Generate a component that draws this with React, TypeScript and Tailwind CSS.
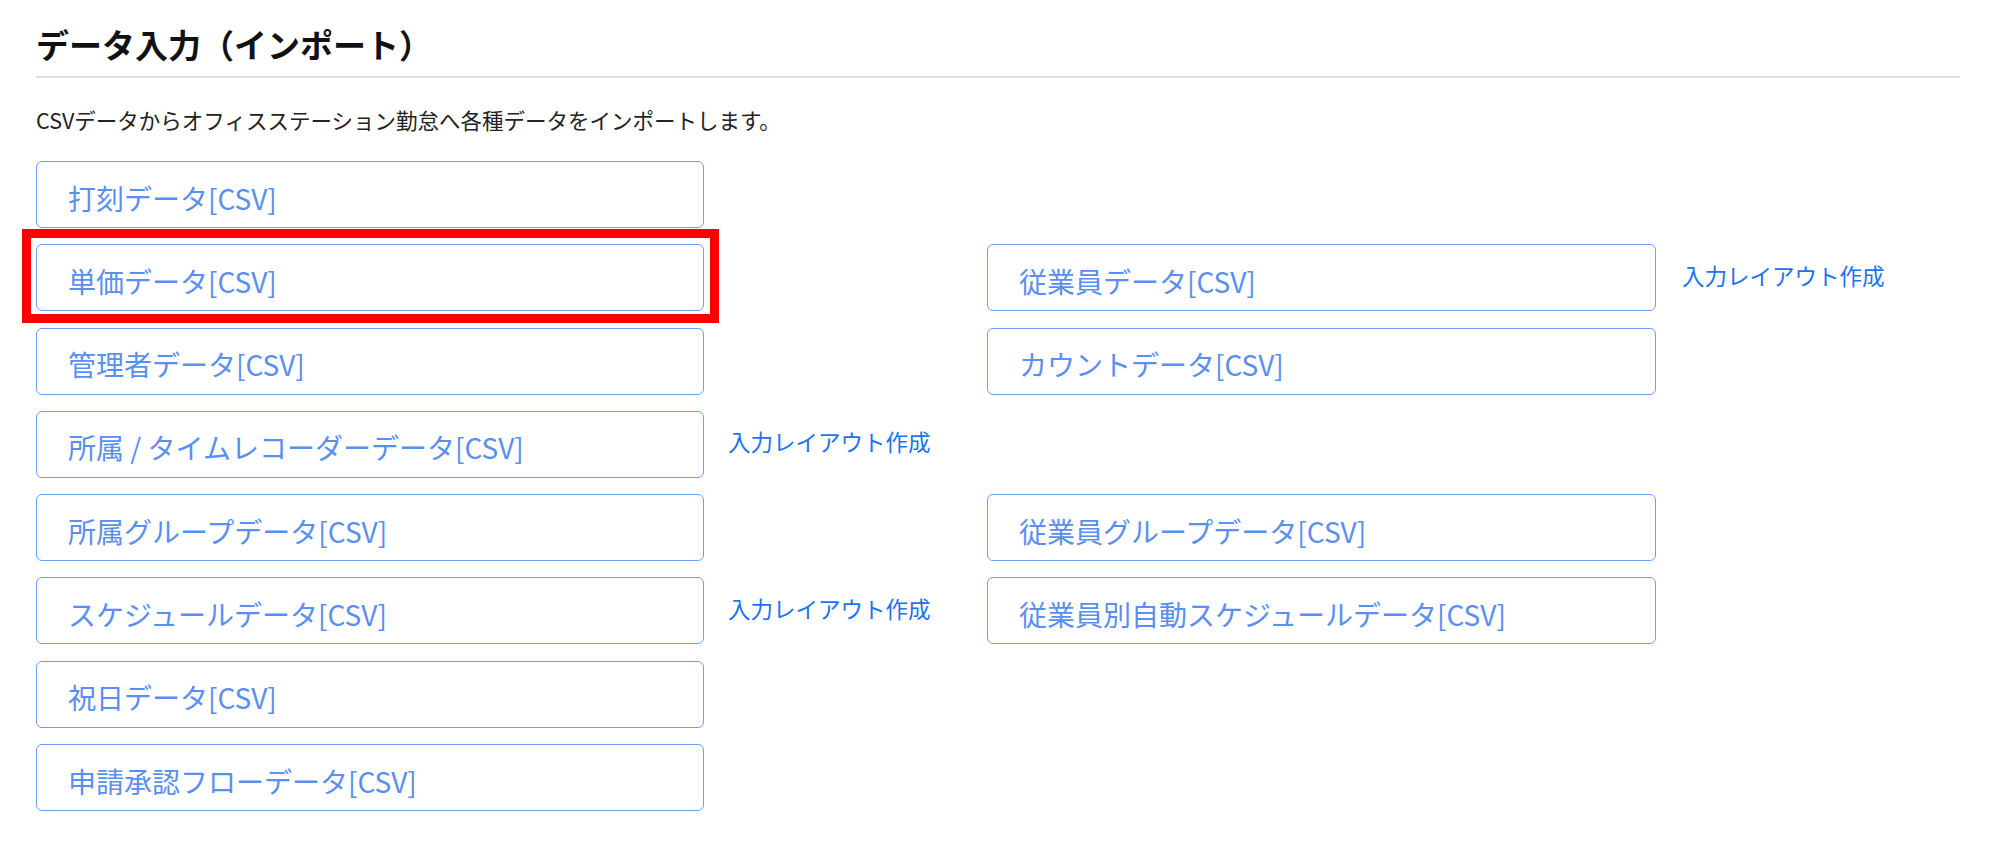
import React from "react";

type Row = {
  left: string;
  leftLink?: boolean;
  right?: string;
  rightLink?: boolean;
  highlight?: boolean;
};

const rows: Row[] = [
  { left: "打刻データ[CSV]" },
  { left: "単価データ[CSV]", highlight: true, right: "従業員データ[CSV]", rightLink: true },
  { left: "管理者データ[CSV]", right: "カウントデータ[CSV]" },
  { left: "所属 / タイムレコーダーデータ[CSV]", leftLink: true },
  { left: "所属グループデータ[CSV]", right: "従業員グループデータ[CSV]" },
  { left: "スケジュールデータ[CSV]", leftLink: true, right: "従業員別自動スケジュールデータ[CSV]" },
  { left: "祝日データ[CSV]" },
  { left: "申請承認フローデータ[CSV]" },
];

function ImportButton({ label, highlight }: { label: string; highlight?: boolean }) {
  return (
    <div className="relative h-[67px]">
      <button
        type="button"
        className="flex h-full w-full items-center rounded-[6px] border border-[#6d9ef2] bg-white pl-[31px] pt-[6px] text-left text-[28px] text-[#5a8ef0]"
      >
        {label}
      </button>
      {highlight && (
        <div className="pointer-events-none absolute -left-[14px] -top-[15px] -right-[15px] -bottom-[12px] border-[9px] border-[#ff0000]" />
      )}
    </div>
  );
}

function LayoutLink() {
  return (
    <a href="#" className="-mt-[6px] text-[22.5px] leading-[30px] text-[#1b73f0]">
      入力レイアウト作成
    </a>
  );
}

export default function App() {
  return (
    <div
      className="min-h-screen bg-white pl-[36px] pr-[40px] pt-[24px]"
      style={{ fontFamily: '"Noto Sans CJK JP", "Noto Sans", sans-serif' }}
    >
      <h1 className="border-b-2 border-[#dedede] pb-[12px] text-[33px] font-bold leading-[40px] text-[#111]">
        データ入力（インポート）
      </h1>

      <p className="mt-[27px] text-[21.5px] leading-[30px] text-[#222]">
        CSVデータからオフィスステーション勤怠へ各種データをインポートします。
      </p>

      <div className="mt-[26px] grid grid-cols-[668px_283px_669px_auto] gap-y-[16.3px]">
        {rows.map((row, i) => (
          <React.Fragment key={i}>
            <ImportButton label={row.left} highlight={row.highlight} />
            <div className="flex items-center pl-[24px]">{row.leftLink && <LayoutLink />}</div>
            <div>{row.right && <ImportButton label={row.right} />}</div>
            <div className="flex items-center pl-[26px]">{row.rightLink && <LayoutLink />}</div>
          </React.Fragment>
        ))}
      </div>
    </div>
  );
}
